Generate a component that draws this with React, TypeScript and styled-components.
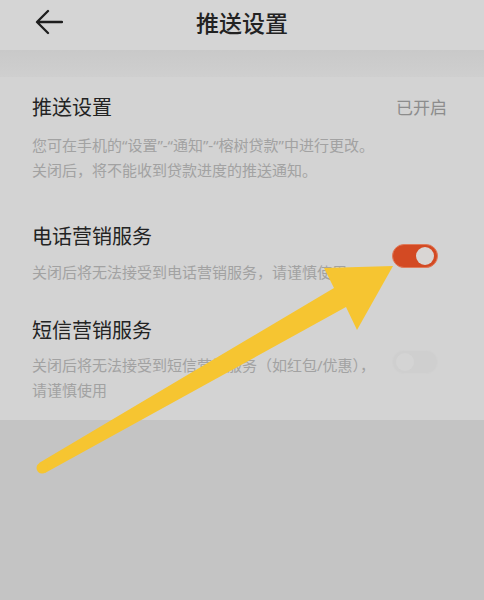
import React from "react";
import styled, { createGlobalStyle } from "styled-components";

const GlobalStyle = createGlobalStyle`
  html, body {
    margin: 0;
    padding: 0;
    background: #c4c4c4;
  }
  body {
    font-family: "Noto Sans CJK SC", "Noto Sans", "Liberation Sans", sans-serif;
  }
`;

const Page = styled.div`
  position: relative;
  width: 484px;
  min-height: 600px;
  background: #c4c4c4;
  overflow: hidden;
`;

const Header = styled.header`
  height: 50px;
  display: grid;
  grid-template-columns: 1fr auto 1fr;
  align-items: center;
  padding: 0 35px;
  background: #d5d5d5;
`;

const BackButton = styled.button`
  justify-self: start;
  display: flex;
  align-items: center;
  width: 28px;
  height: 28px;
  padding: 0;
  margin-top: -6px;
  border: none;
  background: transparent;
`;

const Title = styled.h1`
  margin: -6px 0 0;
  font-size: 23px;
  font-weight: 500;
  color: #222222;
  line-height: 32px;
`;

const Band = styled.div`
  height: 27px;
  background: linear-gradient(#c9c9c9, #cfcfcf);
`;

const Card = styled.main`
  background: #d3d3d3;
  padding: 0 37px 17px 32px;
`;

const Section = styled.section<{ $top: number }>`
  display: flex;
  align-items: center;
  gap: 12px;
  padding-top: ${(p) => p.$top}px;
`;

const TextCol = styled.div`
  flex: 1;
  min-width: 0;
`;

const HeadRow = styled.div`
  display: flex;
  justify-content: space-between;
  align-items: center;
`;

const Label = styled.div`
  font-size: 20px;
  line-height: 28px;
  color: #232323;
`;

const Status = styled.div`
  font-size: 17px;
  line-height: 28px;
  color: #8c8c8c;
`;

const Desc = styled.p<{ $gap: number }>`
  margin: ${(p) => p.$gap}px 0 0;
  font-family: "Noto Sans", "Noto Sans CJK SC", sans-serif;
  font-size: 15px;
  line-height: 25px;
  color: #a2a2a2;
  white-space: nowrap;
`;

const Toggle = styled.div<{ $on: boolean }>`
  flex: none;
  position: relative;
  width: 46px;
  height: 24px;
  margin: 4px 9px 0 0;
  border-radius: 12px;
  box-sizing: border-box;
  background: ${(p) => (p.$on ? "#d34a23" : "#cfcfcf")};
  border: 1px solid ${(p) => (p.$on ? "#e07a5a" : "#d2d2d2")};
  &::after {
    content: "";
    position: absolute;
    top: 2px;
    left: ${(p) => (p.$on ? "23px" : "3px")};
    width: 18px;
    height: 18px;
    border-radius: 50%;
    background: ${(p) => (p.$on ? "#d9d6d4" : "#d4d4d4")};
  }
`;

const Overlay = styled.svg`
  position: absolute;
  left: 0;
  top: 0;
  width: 484px;
  height: 600px;
  pointer-events: none;
`;

export default function App() {
  return (
    <Page>
      <GlobalStyle />
      <Header>
        <BackButton aria-label="返回">
          <svg width="28" height="26" viewBox="0 0 28 26">
            <path
              d="M27 13 H3 M13 2 L2 13 L13 24"
              fill="none"
              stroke="#1e1e1e"
              strokeWidth="2.3"
              strokeLinecap="round"
              strokeLinejoin="round"
            />
          </svg>
        </BackButton>
        <Title>推送设置</Title>
        <span />
      </Header>
      <Band />
      <Card>
        <Section $top={16}>
          <TextCol>
            <HeadRow>
              <Label>推送设置</Label>
              <Status>已开启</Status>
            </HeadRow>
            <Desc $gap={12}>
              您可在手机的“设置”-“通知”-“榕树贷款”中进行更改。
              <br />
              关闭后，将不能收到贷款进度的推送通知。
            </Desc>
          </TextCol>
        </Section>
        <Section $top={39}>
          <TextCol>
            <Label>电话营销服务</Label>
            <Desc $gap={10}>关闭后将无法接受到电话营销服务，请谨慎使用</Desc>
          </TextCol>
          <Toggle $on={true} />
        </Section>
        <Section $top={31}>
          <TextCol>
            <Label>短信营销服务</Label>
            <Desc $gap={9}>
              关闭后将无法接受到短信营销服务（如红包/优惠），
              <br />
              请谨慎使用
            </Desc>
          </TextCol>
          <Toggle $on={false} />
        </Section>
      </Card>
      <Overlay viewBox="0 0 484 600">
        <polygon
          points="393,266 357,330 346,307 45,473 39,463 334,288 324,268"
          fill="#f6c531"
          strokeLinejoin="round"
        />
        <circle cx="42" cy="468" r="5.5" fill="#f6c531" />
      </Overlay>
    </Page>
  );
}
